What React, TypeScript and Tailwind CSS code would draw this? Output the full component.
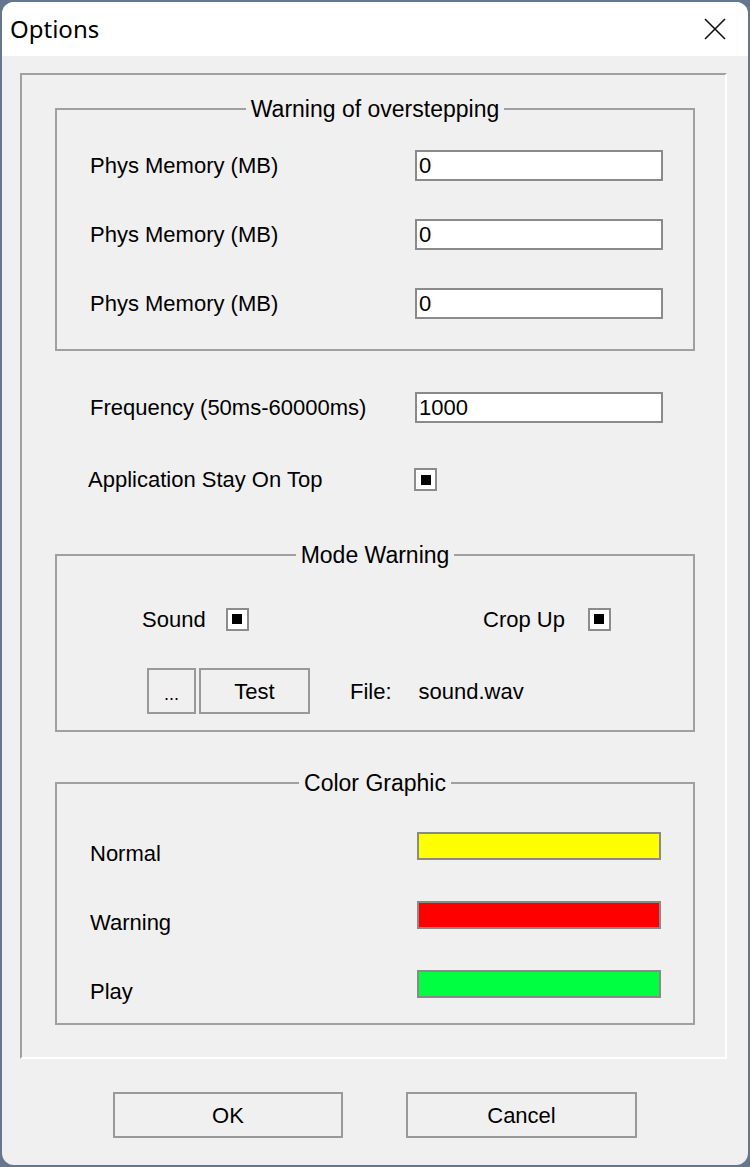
import React from 'react';

const font = { fontFamily: '"Liberation Sans", Arial, sans-serif' };

const Check = () => (
    <div className="w-[23px] h-[23px] bg-white border-2 border-[#8c8c8c] flex items-center justify-center">
        <div className="w-[10px] h-[10px] bg-black" />
    </div>
);

const Field = ({ value }: { value: string }) => (
    <div className="w-[248px] h-[31px] bg-white border-2 border-[#8a8a8a] flex items-center pl-[2px] text-[22px] leading-none">
        {value}
    </div>
);

const Group = ({ title, className, children }: { title: string; className?: string; children: React.ReactNode }) => (
    <fieldset className={`border-2 border-[#a0a0a0] m-0 min-w-0 ${className ?? ''}`}>
        <legend className="mx-auto px-[5px] text-[23px] leading-[24px]">{title}</legend>
        {children}
    </fieldset>
);

export default function App() {
    const colors = [
        { label: 'Normal', color: 'bg-[#ffff00]' },
        { label: 'Warning', color: 'bg-[#ff0000]' },
        { label: 'Play', color: 'bg-[#00ff40]' },
    ];

    return (
        <div className="min-h-screen bg-[#66768f] p-[2px]" style={font}>
            <div className="h-[1163px] flex flex-col rounded-[12px] overflow-hidden bg-[#f0f0f0] text-black">
                {/* title bar */}
                <div className="h-[54px] bg-white flex items-center justify-between pl-[8px] pr-[21px]">
                    <span className="text-[24px]" style={{ fontFamily: '"Segoe UI", "Noto Sans", sans-serif' }}>Options</span>
                    <svg width="24" height="24" viewBox="0 0 24 24" fill="none" stroke="#111" strokeWidth="1.6">
                        <path d="M2 2 L22 22 M22 2 L2 22" />
                    </svg>
                </div>

                {/* etched frame */}
                <div className="ml-[18px] mr-[21px] mt-[17px] h-[986px] border-2 border-t-[#a0a0a0] border-l-[#a0a0a0] border-b-white border-r-white pl-[33px] pr-[30px] pt-[22px]">
                    <Group title="Warning of overstepping" className="pt-[29px] pb-[30px]">
                        <div className="flex flex-col gap-[38px]">
                            {['0', '0', '0'].map((v, i) => (
                                <div key={i} className="flex items-center h-[31px]">
                                    <span className="w-[358px] pl-[33px] text-[22px]">Phys Memory (MB)</span>
                                    <Field value={v} />
                                </div>
                            ))}
                        </div>
                    </Group>

                    <div className="flex items-center h-[31px] mt-[41px]">
                        <span className="w-[360px] pl-[35px] text-[22px]">Frequency (50ms-60000ms)</span>
                        <Field value="1000" />
                    </div>
                    <div className="flex items-center h-[31px] mt-[41px]">
                        <span className="w-[359px] pl-[33px] text-[22px]">Application Stay On Top</span>
                        <Check />
                    </div>

                    <Group title="Mode Warning" className="mt-[48px] pt-[40px] pb-[16px]">
                        <div className="flex items-center h-[24px] pl-[85px] text-[22px]">
                            <div className="w-[341px] flex items-center">
                                <span>Sound</span>
                                <div className="ml-[20px]"><Check /></div>
                            </div>
                            <div className="flex items-center">
                                <span>Crop Up</span>
                                <div className="ml-[23px]"><Check /></div>
                            </div>
                        </div>
                        <div className="flex items-center h-[46px] mt-[37px] pl-[90px] text-[22px]">
                            <button className="w-[49px] h-[46px] border-2 border-[#999] bg-[#f0f0f0] text-[18px] leading-none pt-[6px]">...</button>
                            <button className="w-[111px] h-[46px] ml-[3px] border-2 border-[#999] bg-[#f0f0f0]">Test</button>
                            <span className="ml-[40px]">File:</span>
                            <span className="ml-[27px]">sound.wav</span>
                        </div>
                    </Group>

                    <Group title="Color Graphic" className="mt-[39px] pt-[37px] pb-[25px]">
                        <div className="flex flex-col gap-[41px]">
                            {colors.map((c) => (
                                <div key={c.label} className="flex items-center h-[28px]">
                                    <span className="w-[360px] pl-[33px] pt-[14px] text-[22px]">{c.label}</span>
                                    <div className={`w-[244px] h-[28px] border-2 border-[#8a8a8a] ${c.color}`} />
                                </div>
                            ))}
                        </div>
                    </Group>
                </div>

                {/* buttons */}
                <div className="flex mt-[33px] pl-[111px] gap-[63px] text-[22px]">
                    <button className="w-[230px] h-[46px] border-2 border-[#999] bg-[#f0f0f0]">OK</button>
                    <button className="w-[231px] h-[46px] border-2 border-[#999] bg-[#f0f0f0]">Cancel</button>
                </div>
            </div>
        </div>
    );
}
